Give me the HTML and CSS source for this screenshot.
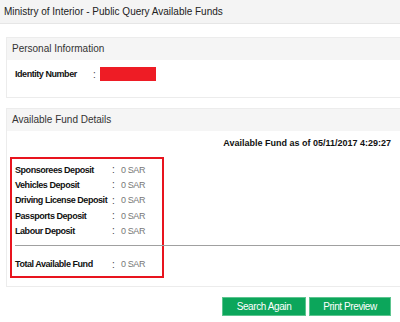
FILE: index.html
```html
<!DOCTYPE html>
<html lang="en">
<head>
    <meta charset="UTF-8">
    <title>Public Query Available Funds</title>
    <link rel="stylesheet" href="styles.css">
</head>
<body>
    <div class="page-title">Ministry of Interior - Public Query Available Funds</div>

    <div class="panel info-panel">
        <div class="panel-head">Personal Information</div>
        <div class="panel-body">
            <div class="id-row">
                <span class="label id-label">Identity Number</span>
                <span class="colon">:</span>
                <span class="masked"></span>
            </div>
        </div>
    </div>

    <div class="panel fund-panel">
        <div class="panel-head">Available Fund Details</div>
        <div class="panel-body">
            <div class="as-of">Available Fund as of 05/11/2017 4:29:27</div>
            <div class="fund-box">
                <div class="fund-row"><span class="label">Sponsorees Deposit</span><span class="colon">:</span><span class="value">0 SAR</span></div>
                <div class="fund-row"><span class="label">Vehicles Deposit</span><span class="colon">:</span><span class="value">0 SAR</span></div>
                <div class="fund-row"><span class="label">Driving License Deposit</span><span class="colon">:</span><span class="value">0 SAR</span></div>
                <div class="fund-row"><span class="label">Passports Deposit</span><span class="colon">:</span><span class="value">0 SAR</span></div>
                <div class="fund-row"><span class="label">Labour Deposit</span><span class="colon">:</span><span class="value">0 SAR</span></div>
                <hr class="divider">
                <div class="fund-row"><span class="label">Total Available Fund</span><span class="colon">:</span><span class="value">0 SAR</span></div>
            </div>
        </div>
    </div>

    <div class="actions">
        <button class="btn">Search Again</button>
        <button class="btn">Print Preview</button>
    </div>
</body>
</html>
```

FILE: styles.css
```css
body {
    margin: 0;
    width: 400px;
    overflow: hidden;
    background: #fff;
    font-family: "Liberation Sans", Arial, sans-serif;
    font-size: 10px;
    color: #222;
}
.page-title {
    height: 23px;
    line-height: 23px;
    padding-left: 4px;
    background: #f4f4f4;
    border-bottom: 1px solid #e6e6e6;
    font-size: 10px;
    color: #222;
    white-space: nowrap;
}
.panel {
    margin-left: 6px;
    width: 400px;
    border: 1px solid #ececec;
    box-sizing: border-box;
}
.info-panel {
    margin-top: 13px;
    height: 61px;
}
.fund-panel {
    margin-top: 10px;
    height: 179px;
}
.panel-head {
    height: 22px;
    line-height: 22px;
    padding-left: 5px;
    background: #f5f5f5;
    font-size: 10px;
    color: #333;
}
.panel-body {
    padding: 0 14px 0 3px;
}
.id-row {
    display: flex;
    align-items: center;
    height: 14px;
    margin-top: 7px;
    padding-left: 5px;
}
.label {
    flex-shrink: 0;
    white-space: nowrap;
    font-weight: bold;
    color: #111;
    font-size: 9px;
    letter-spacing: -0.45px;
}
.id-label {
    width: 78px;
}
.colon {
    flex-shrink: 0;
    width: 7px;
    color: #444;
}
.masked {
    flex-shrink: 0;
    width: 56px;
    height: 14px;
    background: #ee1c25;
}
.as-of {
    text-align: right;
    height: 24px;
    line-height: 24px;
    font-weight: bold;
    font-size: 9px;
    color: #111;
}
.fund-box {
    box-sizing: border-box;
    margin-top: 2px;
    width: 154px;
    height: 121px;
    border: 2px solid #e8141e;
    padding-top: 3px;
}
.fund-row {
    display: flex;
    align-items: center;
    height: 15.3px;
    padding-left: 3px;
}
.fund-row .label {
    width: 97px;
}
.fund-row .colon {
    width: 9px;
}
.value {
    color: #777;
    font-size: 9px;
    letter-spacing: -0.4px;
}
.divider {
    margin: 7px 0 10px 3px;
    width: 388px;
    border: 0;
    border-top: 1px solid #a0a0a0;
}
.actions {
    display: flex;
    justify-content: flex-end;
    gap: 3px;
    margin-top: 10px;
    padding-right: 9px;
}
.btn {
    height: 19px;
    padding: 0;
    background: #0ca65b;
    border: 1px solid #5cc58f;
    color: #fff;
    font-family: "Liberation Sans", Arial, sans-serif;
    font-size: 10px;
    letter-spacing: -0.4px;
}
.btn:first-child {
    width: 84px;
}
.btn:last-child {
    width: 82px;
}
```
